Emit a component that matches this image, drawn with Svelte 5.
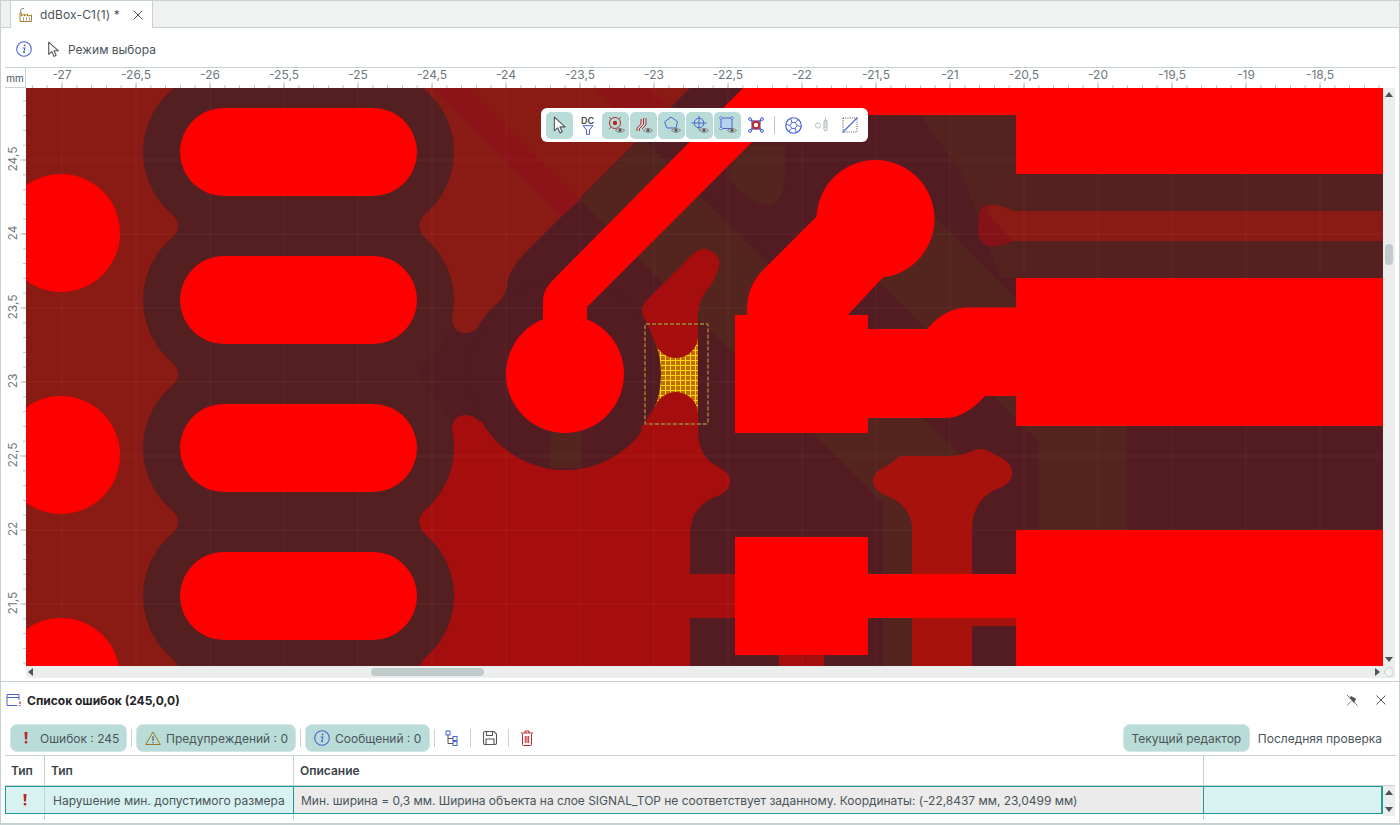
<script>
  const xLabels = [];
  for (let i = 0; i <= 17; i++) {
    const v = -27 + i * 0.5;
    xLabels.push({ x: 62 + i * 74, text: String(v).replace('.', ',') });
  }
  const yLabels = [];
  for (let i = 0; i <= 6; i++) {
    const v = 24.5 - i * 0.5;
    yLabels.push({ y: 160 + i * 74, text: String(v).replace('.', ',') });
  }
  const xTicks = [];
  for (let x = 32.4; x < 1383; x += 14.8) xTicks.push(x);
  const yTicks = [];
  for (let y = 100.8; y < 666; y += 14.8) yTicks.push(y);

  const gridX = xLabels.map((l) => l.x);
  const gridY = yLabels.map((l) => l.y);

  const pads = [152, 300, 448, 596];

  // clearance column between the oblong pads, rounded notches on both sides
  const notches = [78, 226, 374, 522, 670];
  let column = 'M190 60';
  for (const y of notches) column += `V${y - 13.5}H170.5Q186 ${y} 170.5 ${y + 13.5}H190`;
  column += 'V690H406';
  for (const y of [...notches].reverse()) column += `V${y + 13.5}H426.5Q412 ${y} 426.5 ${y - 13.5}H406`;
  column += 'V60Z';

  // aperture icon: six blades from the inner hexagon out to the rim
  let blades = '';
  for (let i = 0; i < 6; i++) {
    const a = (i * Math.PI) / 3;
    const b = a + Math.PI / 2.6;
    const hx = 8 + 3.2 * Math.cos(a);
    const hy = 8 + 3.2 * Math.sin(a);
    const nx = 8 + 3.2 * Math.cos(a + Math.PI / 3);
    const ny = 8 + 3.2 * Math.sin(a + Math.PI / 3);
    const ox = 8 + 7.3 * Math.cos(b);
    const oy = 8 + 7.3 * Math.sin(b);
    blades += `M${hx.toFixed(2)} ${hy.toFixed(2)}L${nx.toFixed(2)} ${ny.toFixed(2)}L${ox.toFixed(2)} ${oy.toFixed(2)}`;
  }
</script>

<div class="window">
  <div class="tabbar">
    <div class="tab">
      <svg class="tab-icon" viewBox="1 0 14 16" width="14" height="16">
        <path d="M2 14.500V6h1.500v3l3-2v2l3-2v2l4-1v6.500z" fill="#fff" stroke="#a8842a" stroke-width="1" />
        <path d="M2.700 6V3Q3 1 6 1.500" fill="none" stroke="#8a8a8a" stroke-width="1" />
        <path d="M5 11h1M8 11h1M11 11h1M5 13h1M8 13h1M11 13h1" stroke="#555" stroke-width="1" />
      </svg>
      <span class="tab-name">ddBox-C1(1) *</span>
      <svg class="tab-close" viewBox="0 0 10 10" width="10" height="10">
        <path d="M.7.7l8.600 8.600M9.300.7L.7 9.300" stroke="#555" stroke-width="1" />
      </svg>
    </div>
  </div>

  <div class="modebar">
    <svg viewBox="0 0 16 16" width="16" height="16">
      <circle cx="8" cy="8" r="7.300" fill="none" stroke="#4a63d0" stroke-width="1.100" />
      <circle cx="8.600" cy="4.400" r="0.900" fill="#4a63d0" />
      <path d="M6.600 7h2.300L7.700 11.500h1.300" fill="none" stroke="#4a63d0" stroke-width="1.100" />
    </svg>
    <svg class="mode-cursor" viewBox="0 0 13 16" width="14" height="17">
      <path d="M1.500 1v11.500l3-2.500 2 4.500 2-1-2-4.300h4.200z" fill="#fff" stroke="#555" stroke-width="1" stroke-linejoin="round" />
    </svg>
    <span class="mode-label">Режим выбора</span>
  </div>

  <div class="view">
    <div class="corner">mm</div>
    <svg class="ruler-top" viewBox="26 68 1369 20">
      {#each xTicks as x}
        <line x1={x} x2={x} y1="85" y2="88" stroke="#b9c4c6" />
      {/each}
      {#each xLabels as l}
        <line x1={l.x} x2={l.x} y1="82" y2="88" stroke="#b9c4c6" />
        <text x={l.x} y="79" text-anchor="middle">{l.text}</text>
      {/each}
    </svg>
    <svg class="ruler-left" viewBox="5 88 21 578">
      {#each yTicks as y}
        <line x1="23" x2="26" y1={y} y2={y} stroke="#b9c4c6" />
      {/each}
      {#each yLabels as l}
        <line x1="20" x2="26" y1={l.y} y2={l.y} stroke="#b9c4c6" />
        <text transform="translate(16.500 {l.y - 1}) rotate(-90)" text-anchor="middle">{l.text}</text>
      {/each}
    </svg>

    <div class="canvas">
      <svg class="board" viewBox="26 88 1357 578">
        <defs>
          <pattern id="mesh" x="650" y="335" width="5" height="5" patternUnits="userSpaceOnUse">
            <rect width="5" height="5" fill="#bd6f00" />
            <path d="M0 .5H5M.5 0V5" stroke="#ffd21a" stroke-width="1" />
          </pattern>
        </defs>

        <rect x="26" y="88" width="1357" height="578" fill="#531c22" />

        <!-- copper pour on the inner layer -->
        <path
          d="M26 88H690L525 253Q507 272 507 287Q505 298 492 308Q484 316 478 327Q472 334 464 333Q452 331 452 318V300H400V666H26Z"
          fill="#8a1b14"
        />
        <path d="M433 88H468L580 200L561 217Z" fill="#8c1318" />
        <path d="M595 88H650L672 110L615 108Z" fill="#8c1318" />

        <path d="M580 200L642 138L965 460L912 520V666H883V503Z" fill="#54241e" />
        <path d="M935 217L1127 409V530H1038V440L878 280Z" fill="#54241e" />
        <path d="M920 115H1016V278H1000L970 195Q960 165 945 150Z" fill="#54221f" />
        <path d="M730 145H785V178Q783 205 765 205Q752 205 730 180Z" fill="#54241e" />
        <rect x="1016" y="174" width="367" height="104" fill="#542020" />
        <path
          d="M1383 211H1013Q1003 205 993 205Q980 205 979 218L978 232Q980 246 993 246Q1003 246 1013 241H1383Z"
          fill="#8a1b14"
        />
        <path d="M987 205Q980 205 979 218L978 232Q980 246 993 246Q1003 246 1013 241L987 213Z" fill="#841218" />

        <path
          d="M400 666V440H452V430Q452 417 464 415Q472 414 480 422L500 400H698V430Q698 458 720 468Q730 473 730 481Q730 490 720 495Q690 505 690 535V574H735V618H690V666Z"
          fill="#a60e0e"
        />
        <rect x="779" y="650" width="45" height="16" fill="#a60e0e" />

        <!-- the flagged area -->
        <rect x="650" y="335" width="48" height="80" fill="url(#mesh)" />

        <circle cx="565" cy="374" r="96" fill="#531c22" />
        <rect x="550" y="430" width="30" height="38" fill="#54241e" />
        <path d={column} fill="#541f20" />
        {#each pads as y}
          <line x1="224" x2="373" y1={y} y2={y} stroke="#541f20" stroke-width="162" stroke-linecap="round" />
        {/each}

        {#each gridX as x}
          <line x1={x} x2={x} y1="88" y2="666" stroke="#fff" stroke-opacity="0.05" />
        {/each}
        {#each gridY as y}
          <line x1="26" x2="1383" y1={y} y2={y} stroke="#fff" stroke-opacity="0.05" />
        {/each}

        <path
          d="M692 255Q703 245 713 252Q722 258 718 270L712 284Q698 298 698 315V335A22 22 0 0 1 656 345L647 323L643 316Q640 308 646 301Z"
          fill="#a60e0e"
        />
        <path d="M656 405A22 22 0 0 1 698 415V430H640Z" fill="#a60e0e" />
        <path
          d="M912 666V530Q912 505 885 495Q873 490 873 481Q873 472 885 467Q893 462 900 456H950Q965 455 975 450Q982 447 990 452L1003 459Q1012 464 1012 473Q1012 482 1002 487Q972 497 972 530V666Z"
          fill="#a8120c"
        />
        <rect x="972" y="618" width="44" height="8" fill="#a8120c" />

        <!-- top copper -->
        <g fill="#f00">
          <circle cx="61" cy="233" r="59" />
          <circle cx="61" cy="455" r="59" />
          <circle cx="61" cy="677" r="59" />
          <circle cx="565" cy="374" r="59" />
          <circle cx="875.500" cy="219" r="59" />
          <path d="M743 88H806L587 307V340H543V300Q543 290 553 280Z" />
          <rect x="779" y="88" width="604" height="27" />
          <rect x="1016" y="88" width="367" height="86" />
          <path d="M817 216L762 271Q747 287 747 310V320H843L890 270Z" />
          <rect x="735" y="315" width="133" height="118" />
          <path d="M868 329H927Q945 308 967 307.500H1016V396H985Q965 418 945 418H868Z" />
          <rect x="1016" y="278" width="367" height="148" />
          <rect x="735" y="537" width="133" height="118" />
          <rect x="868" y="574" width="148" height="44" />
          <rect x="1016" y="530" width="367" height="136" />
        </g>
        {#each pads as y}
          <line x1="224" x2="373" y1={y} y2={y} stroke="#f00" stroke-width="88" stroke-linecap="round" />
        {/each}

        <rect x="645" y="324" width="63" height="100" rx="1" fill="none" stroke="#9a6b35" stroke-width="1.800" stroke-dasharray="4 2" />
      </svg>

      <div class="floatbar">
        <button class="tb on">
          <svg viewBox="0 0 16 16" width="18" height="18">
            <path d="M3 1v12l3-2.500 2 4.500 2-1-2-4.300h4.500z" fill="#fff" stroke="#555" stroke-width="1" stroke-linejoin="round" />
          </svg>
        </button>
        <button class="tb dc">
          <span class="dc-text">DC</span>
          <svg viewBox="0 0 12 10" width="12" height="10">
            <path d="M1 .7h10L7.500 5v4.300h-3V5z" fill="none" stroke="#4a63d0" stroke-width="1" />
          </svg>
        </button>
        <button class="tb on">
          <svg viewBox="0 0 20 20" width="20" height="20">
            <circle cx="9" cy="8" r="5.500" fill="none" stroke="#b8282a" stroke-width="1" />
            <circle cx="9" cy="8" r="2.200" fill="#b8282a" />
            <path d="M3 2l2 2M15 2l-2 2M3 14l2-2" stroke="#555" stroke-width="0.800" />
            <path d="M9.500 15.500Q14 11.500 18.500 15.500Q14 19 9.500 15.500z" fill="#ddd" stroke="#666" stroke-width="0.800" />
            <circle cx="14" cy="15.300" r="1.500" fill="#555" />
          </svg>
        </button>
        <button class="tb on">
          <svg viewBox="0 0 20 20" width="20" height="20">
            <path d="M3 16v-3l4-4V4M5.500 16v-2.500l4-4V3M8 14l4-4V3" fill="none" stroke="#b8282a" stroke-width="1" />
            <path d="M9.500 15.500Q14 11.500 18.500 15.500Q14 19 9.500 15.500z" fill="#ddd" stroke="#666" stroke-width="0.800" />
            <circle cx="14" cy="15.300" r="1.500" fill="#555" />
          </svg>
        </button>
        <button class="tb on">
          <svg viewBox="0 0 20 20" width="20" height="20">
            <path d="M9 2l6.500 4.500-1.500 6.500H5L2.500 7z" fill="none" stroke="#4a63d0" stroke-width="1" />
            <path d="M9.500 15.500Q14 11.500 18.500 15.500Q14 19 9.500 15.500z" fill="#ddd" stroke="#666" stroke-width="0.800" />
            <circle cx="14" cy="15.300" r="1.500" fill="#555" />
          </svg>
        </button>
        <button class="tb on">
          <svg viewBox="0 0 20 20" width="20" height="20">
            <circle cx="9" cy="8" r="4.800" fill="none" stroke="#4a63d0" stroke-width="1" />
            <path d="M1.500 8h15M9 .8v14" stroke="#4a63d0" stroke-width="1" />
            <path d="M9.500 15.500Q14 11.500 18.500 15.500Q14 19 9.500 15.500z" fill="#ddd" stroke="#666" stroke-width="0.800" />
            <circle cx="14" cy="15.300" r="1.500" fill="#555" />
          </svg>
        </button>
        <button class="tb on">
          <svg viewBox="0 0 20 20" width="20" height="20">
            <rect x="3" y="3" width="11" height="10.500" fill="#b4d2ee" stroke="#4a63d0" stroke-width="1" />
            <g fill="#fff" stroke="#4a63d0" stroke-width="0.800">
              <circle cx="3" cy="3" r="1.300" />
              <circle cx="14" cy="3" r="1.300" />
              <circle cx="3" cy="13.500" r="1.300" />
            </g>
            <path d="M9.500 15.500Q14 11.500 18.500 15.500Q14 19 9.500 15.500z" fill="#ddd" stroke="#666" stroke-width="0.800" />
            <circle cx="14" cy="15.300" r="1.500" fill="#555" />
          </svg>
        </button>
        <button class="tb">
          <svg viewBox="0 0 16 16" width="16" height="16">
            <path d="M2 2L5 5M14 2l-3 3M2 14l3-3M14 14l-3-3" stroke="#4a63d0" stroke-width="1.200" />
            <circle cx="2" cy="2" r="1.400" fill="#fff" stroke="#4a63d0" />
            <circle cx="14" cy="2" r="1.400" fill="#fff" stroke="#4a63d0" />
            <circle cx="2" cy="14" r="1.400" fill="#fff" stroke="#4a63d0" />
            <circle cx="14" cy="14" r="1.400" fill="#fff" stroke="#4a63d0" />
            <path d="M3 3Q8 5.500 13 3Q10.500 8 13 13Q8 10.500 3 13Q5.500 8 3 3z" fill="none" stroke="#4a63d0" stroke-width="0.800" />
            <circle cx="8" cy="8" r="3.400" fill="#fff" stroke="#b8282a" stroke-width="2.200" />
          </svg>
        </button>
        <span class="tb-sep"></span>
        <button class="tb">
          <svg viewBox="0 0 16 16" width="17" height="17">
            <circle cx="8" cy="8" r="7.300" fill="none" stroke="#4a63d0" stroke-width="1.100" />
            <path d={blades} fill="none" stroke="#4a63d0" stroke-width="0.900" />
          </svg>
        </button>
        <button class="tb">
          <svg viewBox="0 0 16 16" width="16" height="16">
            <circle cx="4" cy="8.500" r="2.600" fill="none" stroke="#b4bcbe" stroke-width="1" />
            <rect x="10" y="3.500" width="3" height="10" rx="1" fill="none" stroke="#a8b2b4" stroke-width="1" />
            <path d="M10.300 6l2.500-1.500M10.300 8.500l2.500-1.500M10.300 11l2.500-1.500M11.500 .5v3" stroke="#a8b2b4" stroke-width="1" />
          </svg>
        </button>
        <button class="tb">
          <svg viewBox="0 0 16 16" width="16" height="16">
            <rect x="1" y="1" width="14" height="14" fill="none" stroke="#555" stroke-width="1" stroke-dasharray="1 1.200" />
            <path d="M.5 15.500L15.500 .5" stroke="#4a63d0" stroke-width="1.100" />
          </svg>
        </button>
      </div>
    </div>

    <div class="vscroll">
      <svg class="arrow" viewBox="0 0 8 5" width="8" height="5"><path d="M4 0L8 5H0z" /></svg>
      <div class="vthumb"></div>
      <svg class="arrow bottom" viewBox="0 0 8 5" width="8" height="5"><path d="M0 0H8L4 5z" /></svg>
    </div>
    <div class="hscroll">
      <svg class="arrow" viewBox="0 0 5 8" width="5" height="8"><path d="M5 0V8L0 4z" /></svg>
      <div class="hthumb"></div>
      <svg class="arrow right" viewBox="0 0 5 8" width="5" height="8"><path d="M0 0L5 4L0 8z" /></svg>
    </div>
    <div class="sq"><span class="sq-dot"></span></div>
  </div>

  <div class="panel">
    <div class="panel-head">
      <svg viewBox="0 0 16 14" width="16" height="14">
        <path d="M11.500 12.500H1V1.500h12V7M1 4.500h12" fill="none" stroke="#4a63d0" stroke-width="1" />
        <path d="M14 8.500v2.500M14 12v1.200" stroke="#b8282a" stroke-width="1.200" />
      </svg>
      <span class="panel-title">Список ошибок (245,0,0)</span>
      <svg class="pin" viewBox="0 0 12 12" width="12" height="12">
        <path d="M5 2l5.500 3-1.500 1.500-1 2.500L3.500 4z" fill="#555" />
        <path d="M5 7.500L1 11.500M1 1l10.500 10.500" stroke="#555" stroke-width="0.800" />
      </svg>
      <svg class="panel-close" viewBox="0 0 10 10" width="10" height="10">
        <path d="M.5.5l9 9M9.500.5l-9 9" stroke="#555" stroke-width="1" />
      </svg>
    </div>

    <div class="panel-tools">
      <div class="chip chip-err">
        <svg viewBox="0 0 8 14" width="8" height="14">
          <path d="M2.500 1h3L5 8.500H3z" fill="#b8282a" />
          <rect x="2.800" y="10" width="2.400" height="2.400" fill="#b8282a" />
        </svg>
        <span>Ошибок : 245</span>
      </div>
      <span class="sep"></span>
      <div class="chip chip-warn">
        <svg viewBox="0 0 16 14" width="16" height="14">
          <path d="M8 1L15.300 13.500H.7z" fill="none" stroke="#a07a20" stroke-width="1" />
          <path d="M8 5v5M8 11v1.300" stroke="#444" stroke-width="1" />
        </svg>
        <span>Предупреждений : 0</span>
      </div>
      <span class="sep"></span>
      <div class="chip chip-info">
        <svg viewBox="0 0 16 16" width="16" height="16">
          <circle cx="8" cy="8" r="7.300" fill="none" stroke="#4a63d0" stroke-width="1.100" />
          <circle cx="8.600" cy="4.400" r="0.900" fill="#4a63d0" />
          <path d="M6.600 7h2.300L7.700 11.500h1.300" fill="none" stroke="#4a63d0" stroke-width="1.100" />
        </svg>
        <span>Сообщений : 0</span>
      </div>
      <span class="sep"></span>
      <svg class="tool tool-tree" viewBox="0 0 14 16" width="14" height="16">
        <rect x="1" y="1" width="4" height="4" fill="none" stroke="#4a63d0" />
        <rect x="8" y="6.500" width="4" height="4" fill="none" stroke="#4a63d0" />
        <rect x="8" y="11.500" width="4" height="4" fill="none" stroke="#4a63d0" />
        <path d="M3 5v8.500h5M3 8.500h5" fill="none" stroke="#555" />
      </svg>
      <span class="sep"></span>
      <svg class="tool tool-save" viewBox="0 0 16 16" width="16" height="16">
        <path d="M1.500 3a1.500 1.500 0 0 1 1.500-1.500h9l2.500 2.500v9a1.500 1.500 0 0 1-1.500 1.500H3a1.500 1.500 0 0 1-1.500-1.500z" fill="none" stroke="#555" stroke-width="1.100" />
        <path d="M4.500 1.500v4h6v-4M4 14.500V9h8v5.500" fill="none" stroke="#555" stroke-width="1.100" />
      </svg>
      <span class="sep"></span>
      <svg class="tool tool-trash" viewBox="0 0 14 16" width="14" height="16">
        <path d="M2.500 4v10.500a1 1 0 0 0 1 1h7a1 1 0 0 0 1-1V4M.8 3h12.400M5 3V1h4v2M5.300 6v7M7 6v7M8.700 6v7" fill="none" stroke="#b8282a" stroke-width="1" />
      </svg>
      <div class="scope">
        <span class="chip chip-scope">Текущий редактор</span>
        <span class="scope-off">Последняя проверка</span>
      </div>
    </div>

    <div class="table">
      <div class="thead">
        <div class="th c1">Тип</div>
        <div class="th c2">Тип</div>
        <div class="th c3">Описание</div>
        <div class="th c4"></div>
      </div>
      <div class="tbody">
        <div class="row">
          <div class="td c1 sel">
            <svg viewBox="0 0 8 14" width="8" height="14">
              <path d="M2.500 1h3L5 8.500H3z" fill="#b8282a" />
              <rect x="2.800" y="10" width="2.400" height="2.400" fill="#b8282a" />
            </svg>
          </div>
          <div class="td c2 sel">Нарушение мин. допустимого размера</div>
          <div class="td c3 cur">Мин. ширина = 0,3 мм. Ширина объекта на слое SIGNAL_TOP не соответствует заданному. Координаты: (-22,8437 мм, 23,0499 мм)</div>
          <div class="td c4 sel"></div>
        </div>
        <div class="row-rest">
          <div class="rest c1"></div>
          <div class="rest c2"></div>
          <div class="rest c3"></div>
          <div class="rest c4"></div>
        </div>
      </div>
      <div class="tscroll">
        <svg class="arrow" viewBox="0 0 8 5" width="8" height="5"><path d="M4 0L8 5H0z" /></svg>
        <svg class="arrow bottom" viewBox="0 0 8 5" width="8" height="5"><path d="M0 0H8L4 5z" /></svg>
      </div>
    </div>
  </div>
</div>

<style>
  :global(body) {
    margin: 0;
    background: #fff;
  }

  svg {
    flex: none;
  }

  .window {
    box-sizing: border-box;
    width: 1400px;
    height: 825px;
    overflow: hidden;
    display: flex;
    flex-direction: column;
    border: solid #c5d2d0;
    border-width: 1px 1px 2px 1px;
    font-family: Inter, 'Noto Sans', sans-serif;
    font-size: 12px;
    color: #4a5459;
  }

  .tabbar {
    height: 27px;
    flex: none;
    box-sizing: border-box;
    padding-left: 9px;
    background: #eff2f1;
    border-bottom: 1px solid #c5d2d0;
  }

  .tab {
    box-sizing: border-box;
    width: 143px;
    height: 27px;
    display: flex;
    align-items: center;
    background: #fff;
    border: solid #c5d2d0;
    border-width: 0 1px 0 1px;
    padding-left: 8px;
  }

  .tab-name {
    margin-left: 7px;
    letter-spacing: 0.15px;
  }

  .tab-close {
    margin-left: auto;
    margin-right: 9px;
  }

  .modebar {
    height: 40px;
    flex: none;
    box-sizing: border-box;
    display: flex;
    align-items: center;
    padding: 2px 0 0 15px;
  }

  .mode-cursor {
    margin-left: 15px;
  }

  .mode-label {
    margin-left: 7px;
  }

  .view {
    flex: none;
    width: 1391px;
    margin-left: 4px;
    display: grid;
    grid-template-columns: 21px 1357px 12px;
    grid-template-rows: 20px 578px 12px;
    border-top: 1px solid #c5d2d0;
    margin-top: -1px;
  }

  .corner {
    box-sizing: border-box;
    border-right: 1px solid #c5d2d0;
    border-bottom: 1px solid #c5d2d0;
    font-size: 10px;
    display: flex;
    align-items: center;
    justify-content: center;
    color: #4a5459;
    padding-top: 1px;
  }

  .ruler-top {
    grid-column: 2 / 4;
    display: block;
    width: 1369px;
    height: 20px;
  }

  .ruler-left {
    display: block;
    width: 21px;
    height: 578px;
  }

  .ruler-top text,
  .ruler-left text {
    font-family: Inter, sans-serif;
    font-size: 12px;
    fill: #6d777c;
  }

  .canvas {
    position: relative;
    width: 1357px;
    height: 578px;
  }

  .board {
    display: block;
    width: 1357px;
    height: 578px;
  }

  .floatbar {
    position: absolute;
    left: 515px;
    top: 20px;
    height: 34px;
    box-sizing: border-box;
    padding: 0 5px 0 5px;
    display: flex;
    align-items: center;
    gap: 1px;
    background: #fff;
    border-radius: 6px;
  }

  .tb {
    width: 27px;
    height: 27px;
    padding: 0;
    border: none;
    border-radius: 5px;
    background: transparent;
    display: flex;
    flex-direction: column;
    align-items: center;
    justify-content: center;
  }

  .tb.on {
    background: #b9dcd8;
  }

  .dc-text {
    font-family: Inter, sans-serif;
    font-size: 9px;
    font-weight: 600;
    line-height: 9px;
    color: #444;
  }

  .tb-sep {
    width: 1px;
    height: 18px;
    margin: 0 4px 0 4px;
    background: #b9c8c8;
  }

  .vscroll {
    background: #ebeeed;
    display: flex;
    flex-direction: column;
    align-items: center;
    padding-top: 4px;
    box-sizing: border-box;
  }

  .vthumb {
    width: 8px;
    height: 21px;
    margin-top: 147px;
    border-radius: 4px;
    background: #c0cccc;
  }

  .arrow {
    display: block;
    flex: none;
    fill: #4a5459;
  }

  .arrow.bottom {
    margin-top: auto;
    margin-bottom: 4px;
  }

  .hscroll {
    grid-column: 2;
    grid-row: 3;
    background: #ebeeed;
    display: flex;
    align-items: center;
    padding-left: 2px;
    box-sizing: border-box;
  }

  .hthumb {
    width: 113px;
    height: 8px;
    margin-left: 338px;
    border-radius: 4px;
    background: #c0cccc;
  }

  .arrow.right {
    margin-left: auto;
    margin-right: 3px;
  }

  .sq {
    grid-column: 3;
    grid-row: 3;
    background: #ebeeed;
    display: flex;
    align-items: center;
    justify-content: center;
  }

  .sq-dot {
    width: 10px;
    height: 10px;
    box-sizing: border-box;
    border: 1px solid #c8d2d2;
    border-radius: 50%;
    background: #f1f3f2;
  }

  .panel {
    margin-top: 3px;
    flex: 1;
    min-height: 0;
    display: flex;
    flex-direction: column;
    border-top: 1px solid #c5d2d0;
  }

  .panel-head {
    height: 36px;
    flex: none;
    display: flex;
    align-items: center;
    padding: 0 13px 0 5px;
  }

  .panel-title {
    margin-left: 5px;
    font-weight: 700;
    color: #1f2528;
  }

  .pin {
    margin-left: auto;
  }

  .panel-close {
    margin-left: 18px;
  }

  .panel-tools {
    height: 28px;
    flex: none;
    padding: 6px 17px 0 9px;
    display: flex;
    align-items: center;
    gap: 4px;
  }

  .chip {
    box-sizing: border-box;
    height: 28px;
    display: flex;
    align-items: center;
    background: #b9dcd8;
    border: 1px solid #d2e6e3;
    border-radius: 7px;
    padding: 0 8px;
    white-space: nowrap;
  }

  .chip-err {
    width: 117px;
    gap: 10px;
    padding-left: 11px;
  }

  .chip-warn {
    width: 160px;
    gap: 5px;
  }

  .chip-info {
    width: 125px;
    gap: 5px;
  }

  .sep {
    width: 1px;
    height: 18px;
    flex: none;
    background: #c5d2d0;
  }

  .tool-tree {
    margin: 0 7px 0 6px;
  }

  .tool-save {
    margin: 0 6px 0 7px;
  }

  .tool-trash {
    margin-left: 7px;
  }

  .scope {
    margin-left: auto;
    display: flex;
    align-items: center;
    gap: 8px;
  }

  .chip-scope {
    width: 127px;
    justify-content: center;
    padding: 0;
  }

  .table {
    margin-top: 3px;
    margin-left: 4px;
    flex: 1;
    min-height: 0;
    display: grid;
    grid-template-columns: 1378px 12px;
    grid-template-rows: 30px 1fr;
    border-top: 1px solid #c5d2d0;
    width: 1391px;
  }

  .thead {
    grid-column: 1 / 3;
    display: flex;
    border-bottom: 1px solid #c5d2d0;
  }

  .c1 {
    width: 40px;
    flex: none;
  }

  .c2 {
    width: 249px;
    flex: none;
  }

  .c3 {
    width: 910px;
    flex: none;
  }

  .c4 {
    flex: 1;
  }

  .th {
    box-sizing: border-box;
    display: flex;
    align-items: center;
    padding-left: 6px;
    font-weight: 600;
    color: #3a4347;
    border-right: 1px solid #c5d2d0;
  }

  .th.c4 {
    border-right: none;
  }

  .row {
    box-sizing: border-box;
    height: 28px;
    display: flex;
    border: 2px solid #1f9a96;
    border-width: 1px 2px 1px 1px;
  }

  .td {
    box-sizing: border-box;
    display: flex;
    align-items: center;
    padding-left: 8px;
    white-space: nowrap;
    overflow: hidden;
    border-right: 1px solid #c5d2d0;
  }

  .td.c1 {
    justify-content: center;
    padding-left: 0;
    width: 39px;
  }

  .td.c2 {
    border-right: 1px solid #1f9a96;
  }

  .td.c3 {
    border-right: 1px solid #1f9a96;
    padding-left: 7px;
    letter-spacing: -0.025px;
  }

  .td.c4 {
    border-right: none;
  }

  .sel {
    background: #d8f2f1;
  }

  .cur {
    background: #ebebeb;
  }

  .row-rest {
    display: flex;
    height: 6px;
  }

  .rest {
    box-sizing: border-box;
    border-right: 1px solid #c5d2d0;
  }

  .rest.c4 {
    border-right: none;
  }

  .tscroll {
    height: 30px;
    background: #ebeeed;
    display: flex;
    flex-direction: column;
    align-items: center;
    padding-top: 4px;
    box-sizing: border-box;
  }
</style>
